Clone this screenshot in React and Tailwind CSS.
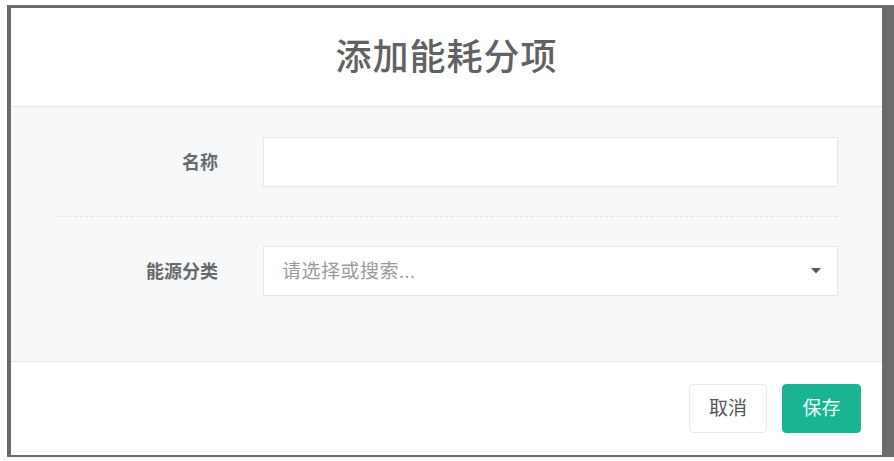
import React from 'react';

const font = { fontFamily: '"Open Sans", "Noto Sans CJK SC", sans-serif' };

export default function App() {
  return (
    <div className="w-[894px] h-[461px] bg-white overflow-hidden" style={font}>
      <div className="ml-[7px] mt-[5px] w-[887px] bg-[#6b6b6b] pl-[4px] pt-[3px] pr-[12px] pb-[2px]">
        <div className="w-[871px] h-[447px] bg-white flex flex-col">
          {/* Header */}
          <div className="h-[99px] border-b border-[#e5e6e7] flex items-center justify-center">
            <h2 className="text-[36px] font-medium text-[#5f6163] tracking-[1px]">添加能耗分项</h2>
          </div>

          {/* Body */}
          <div className="h-[255px] bg-[#f7f8fa] border-b border-[#e5e6e7] pt-[30px]">
            <div className="flex items-center">
              <label className="w-[207px] text-right text-[18px] font-semibold text-[#676a6c]">名称</label>
              <input
                type="text"
                className="ml-[45px] w-[575px] h-[50px] bg-white border border-[#e5e6e7] rounded-[1px] outline-none px-3 text-[18px]"
              />
            </div>

            <div className="ml-[44px] mr-[44px] my-[29px] border-t border-dashed border-[#e3e4e6]" />

            <div className="flex items-center">
              <label className="w-[207px] text-right text-[18px] font-semibold text-[#676a6c]">能源分类</label>
              <div className="ml-[45px] w-[575px] h-[50px] bg-white border border-[#e5e6e7] rounded-[1px] flex items-center justify-between pl-[18px] pr-[16px]">
                <span className="text-[19px] text-[#9a9a9a] tracking-[0.5px]">请选择或搜索...</span>
                <svg width="10" height="6" viewBox="0 0 10 6">
                  <path d="M0 0 L10 0 L5 5.5 Z" fill="#555" />
                </svg>
              </div>
            </div>
          </div>

          {/* Footer */}
          <div className="flex-1 flex items-start justify-end gap-[15px] pt-[22px] pr-[21px]">
            <button className="w-[78px] h-[49px] bg-white border border-[#e7eaec] rounded-[4px] text-[19px] text-[#555]">
              取消
            </button>
            <button className="w-[79px] h-[49px] bg-[#1ab394] border border-[#1ab394] rounded-[4px] text-[19px] text-[#e8fff8]">
              保存
            </button>
          </div>
        </div>
      </div>
    </div>
  );
}
